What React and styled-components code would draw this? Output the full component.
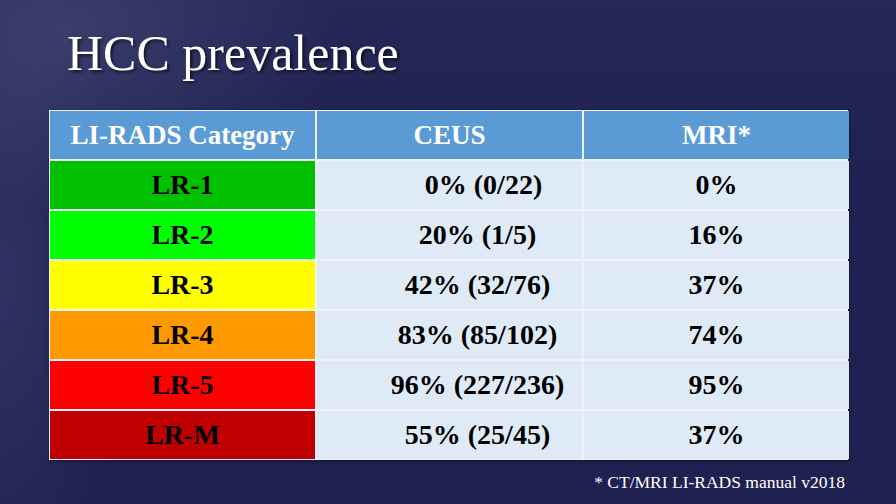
import React from 'react';
import styled, { createGlobalStyle } from 'styled-components';

const GlobalStyle = createGlobalStyle`
  html, body {
    margin: 0;
    padding: 0;
    background: #1f2150;
  }
`;

const rows = [
  { cat: 'LR-1', color: '#00c000', ceus: '0% (0/22)', mri: '0%', shift: 12 },
  { cat: 'LR-2', color: '#00ff00', ceus: '20% (1/5)', mri: '16%', shift: 0 },
  { cat: 'LR-3', color: '#ffff00', ceus: '42% (32/76)', mri: '37%', shift: 0 },
  { cat: 'LR-4', color: '#ff9900', ceus: '83% (85/102)', mri: '74%', shift: 0 },
  { cat: 'LR-5', color: '#ff0000', ceus: '96% (227/236)', mri: '95%', shift: 0 },
  { cat: 'LR-M', color: '#c00000', ceus: '55% (25/45)', mri: '37%', shift: 0 }
];

const App = () => (
  <Slide>
    <GlobalStyle />
    <Title>HCC prevalence</Title>
    <Table>
      <HeadCell>LI-RADS Category</HeadCell>
      <HeadCell>CEUS</HeadCell>
      <HeadCell>MRI*</HeadCell>
      {rows.map(r => (
        <React.Fragment key={r.cat}>
          <CatCell bg={r.color}>{r.cat}</CatCell>
          <ValueCell offset={56 + r.shift}>{r.ceus}</ValueCell>
          <ValueCell offset={0}>{r.mri}</ValueCell>
        </React.Fragment>
      ))}
    </Table>
    <Footnote>* CT/MRI LI-RADS manual v2018</Footnote>
  </Slide>
);

const Slide = styled.div`
  width: 896px;
  height: 504px;
  box-sizing: border-box;
  overflow: hidden;
  display: flex;
  flex-direction: column;
  padding: 26px 48px 0 49px;
  font-family: 'Liberation Serif', 'DejaVu Serif', serif;
  background:
    radial-gradient(ellipse 380px 260px at 8% 6%, rgba(110, 118, 160, 0.28), rgba(110, 118, 160, 0) 70%),
    radial-gradient(ellipse 180px 480px at 0% 55%, rgba(90, 100, 150, 0.28), rgba(90, 100, 150, 0) 70%),
    linear-gradient(180deg, #242856 0%, #1f2150 40%, #1f2150 100%);
`;

const Title = styled.h1`
  margin: 0 0 0 18px;
  font-weight: normal;
  font-size: 50px;
  line-height: 54px;
  color: #ffffff;
  text-shadow: 2px 2px 3px rgba(0, 0, 0, 0.6);
`;

const Table = styled.div`
  margin-top: 30px;
  display: grid;
  grid-template-columns: 265px 265px 265px;
  grid-template-rows: repeat(7, 48px);
  gap: 2px;
  padding: 1px;
  width: 799px;
  box-sizing: border-box;
  background: #eef3fa;
  box-shadow: 1px 1px 3px rgba(0, 0, 0, 0.5);
`;

const Cell = styled.div`
  display: flex;
  align-items: center;
  justify-content: center;
  font-weight: bold;
  font-size: 28px;
`;

const HeadCell = styled(Cell)`
  background: #5b9bd5;
  color: #ffffff;
  font-size: 27px;
`;

const CatCell = styled(Cell)`
  background: ${({ bg }) => bg};
  color: #000000;
`;

const ValueCell = styled(Cell)`
  background: #deeaf6;
  color: #000000;
  padding-left: ${({ offset }) => offset}px;
`;

const Footnote = styled.div`
  align-self: flex-end;
  margin-top: 12px;
  margin-right: 3px;
  font-size: 17.5px;
  color: #ffffff;
`;

export default App;
